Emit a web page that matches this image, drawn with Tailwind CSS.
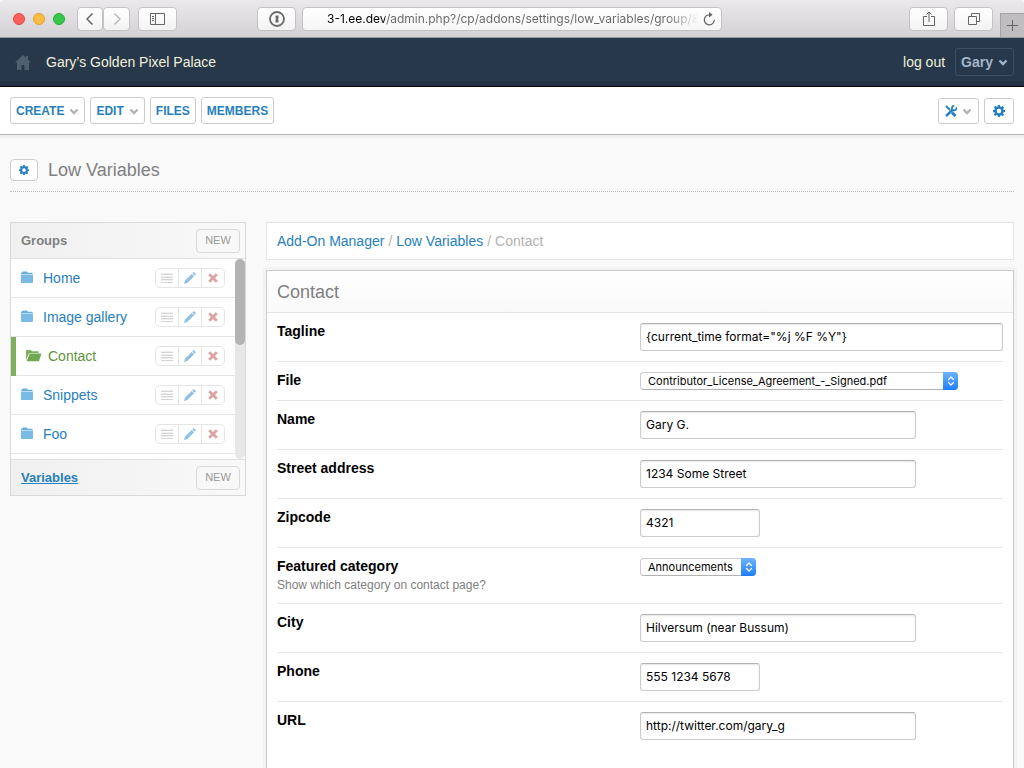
<!DOCTYPE html>
<html lang="en">
  <head>
    <meta charset="UTF-8" />
    <meta name="viewport" content="width=device-width, initial-scale=1.0" />
    <title>Low Variables - Contact</title>
    <script src="https://cdn.jsdelivr.net/npm/@tailwindcss/browser@4"></script>
  </head>
  <body class="flex min-h-screen flex-col overflow-x-hidden bg-[#f9f9f9] font-['Liberation_Sans',Arial,sans-serif] text-sm text-black">
    <!-- Shared icons -->
    <svg class="hidden">
      <symbol id="chevron" viewBox="0 0 10 8">
        <path d="M1.500 2.500 5 6 8.500 2.500" fill="none" stroke="currentColor" stroke-width="2.400" />
      </symbol>
      <symbol id="gear" viewBox="0 0 24 24">
        <path
          fill="currentColor"
          fill-rule="evenodd"
          d="M10 0h4l.6 3.2 2.2.9L19.500 2.200l2.800 2.800-1.900 2.700.9 2.200L24 10v4l-2.900.6-.9 2.200 1.900 2.700-2.800 2.800-2.700-1.900-2.200.9L14 24h-4l-.6-2.900-2.200-.9-2.700 1.900-2.800-2.800 1.900-2.700-.9-2.200L0 14v-4l2.900-.6.9-2.200L1.900 4.500l2.800-2.800 2.700 1.900 2.200-.9zM12 7.500a4.500 4.500 0 1 0 0 9 4.500 4.500 0 0 0 0-9z"
        />
      </symbol>
      <symbol id="folder" viewBox="0 0 12 14">
        <path d="M0 3V1.700h.8L1.800.500h4.200l.8 1.200h4.700V3z" fill="#69b0dd" />
        <path d="M0 3.500h12V11.200a.8.8 0 0 1-.8.8H.8A.8.8 0 0 1 0 11.200z" fill="#7abbe6" />
      </symbol>
      <symbol id="folder-open" viewBox="0 0 16 14">
        <path d="M0 11V1.700L.7 1h4.100l1.200 1.300h6.500V4H4.200L2.800 5z" fill="#7db05f" />
        <path d="M3.800 4.500h11.700L12.900 12.300H.6z" fill="#72a852" />
      </symbol>
      <symbol id="bars" viewBox="0 0 12 10">
        <path d="M0 1h12M0 4h12M0 7h12M0 9.500h12" stroke="#e0e0e0" stroke-width="1" />
        <path d="M0 1.500h12M0 4.500h12M0 6.500h12M0 9.500h12" stroke="#d4d4d4" stroke-width="1" />
      </symbol>
      <symbol id="pencil" viewBox="0 0 12 12">
        <path d="M0 12 .9 8.700 7.700 1.900l2.400 2.400L3.300 11.100zM8.300 1.400 9.700 0 12 2.300 10.600 3.700z" fill="#93bfe0" />
      </symbol>
      <symbol id="cross" viewBox="0 0 10 10">
        <path d="M1.200 1.200 8.800 8.800M8.800 1.200 1.200 8.800" stroke="#dca3a3" stroke-width="2.800" />
      </symbol>
      <symbol id="updown" viewBox="0 0 8 12">
        <path d="M1.500 4.500 4 2l2.500 2.500M1.500 7.500 4 10l2.500-2.500" fill="none" stroke="#fff" stroke-width="1.300" stroke-linecap="round" stroke-linejoin="round" />
      </symbol>
    </svg>

    <!-- Browser toolbar -->
    <div class="flex h-[38px] items-center rounded-t-[4px] border-b border-[#9b999b] bg-linear-to-b from-[#ebe9eb] to-[#d3d1d3] pl-[13px]">
      <div class="flex gap-2">
        <span class="size-3 rounded-full border border-[#e2463f] bg-[#fc605c]"></span>
        <span class="size-3 rounded-full border border-[#dfa032] bg-[#fdbc40]"></span>
        <span class="size-3 rounded-full border border-[#27aa35] bg-[#34c84a]"></span>
      </div>
      <div class="ml-3 flex">
        <button aria-label="Back" class="grid h-6 w-[26px] place-items-center rounded-[4px] border border-[#c4c2c4] bg-linear-to-b from-white to-[#f3f3f3]">
          <svg class="h-3 w-2" viewBox="0 0 8 12" fill="none" stroke="#656565" stroke-width="1.500"><path d="M6.500 .5 1 6 6.500 11.500" /></svg>
        </button>
        <button aria-label="Forward" class="grid h-6 w-[27px] place-items-center rounded-[4px] border border-[#c4c2c4] bg-linear-to-b from-white to-[#f3f3f3]">
          <svg class="h-3 w-2" viewBox="0 0 8 12" fill="none" stroke="#bcbcbc" stroke-width="1.500"><path d="M1.500 .5 7 6 1.500 11.500" /></svg>
        </button>
      </div>
      <button aria-label="Sidebar" class="ml-2 grid h-6 w-[39px] place-items-center rounded-[4px] border border-[#c4c2c4] bg-linear-to-b from-white to-[#f3f3f3]">
        <svg class="h-3 w-[15px]" viewBox="0 0 15 12" fill="none" stroke="#656565"><path d="M.5.500h14v11H.5zM5.500.500v11M2 3.500h2M2 5.500h2M2 7.500h2" /></svg>
      </button>
      <button aria-label="Passwords" class="ml-20 grid h-6 w-[39px] place-items-center rounded-[4px] border border-[#c4c2c4] bg-linear-to-b from-white to-[#f3f3f3]">
        <svg class="size-4" viewBox="0 0 16 16">
          <circle cx="8" cy="8" r="7" fill="none" stroke="#6b6b6b" stroke-width="1.800" />
          <path d="M6.500 4.500h3v3l-.7.700.7.700v2.600h-3v-3l.7-.7-.7-.7z" fill="#6b6b6b" />
        </svg>
      </button>
      <div class="mr-[187px] ml-1.5 flex h-6 flex-1 items-center rounded-[4px] border border-[#c4c2c4] bg-linear-to-b from-white to-[#f6f6f6] pr-[5px] pl-6">
        <input
          type="text"
          aria-label="Address"
          value="3-1.ee.dev/admin.php?/cp/addons/settings/low_variables/group/8"
          class="h-5 min-w-0 flex-1 bg-[linear-gradient(90deg,#000_58px,#666_58px,#666_340px,transparent_372px)] bg-clip-text font-[Inter,sans-serif] text-xs text-transparent outline-none"
        />
        <button aria-label="Reload" class="ml-1">
          <svg class="size-[14px]" viewBox="0 0 14 14">
            <path d="M7.500 2.800a5 5 0 1 0 4.800 5" fill="none" stroke="#656565" stroke-width="1.200" />
            <path d="M7 0v5.600l3.600-2.800z" fill="#656565" />
          </svg>
        </button>
      </div>
      <button aria-label="Share" class="grid h-6 w-[39px] place-items-center rounded-[4px] border border-[#c4c2c4] bg-linear-to-b from-white to-[#f3f3f3]">
        <svg class="h-4 w-3" viewBox="0 0 12 16" fill="none" stroke="#656565"><path d="M4 5.500H.5v9h11v-9H8M6 11V1M3.500 3.500 6 1l2.500 2.500" /></svg>
      </button>
      <button aria-label="Tabs" class="ml-1.5 grid h-6 w-[39px] place-items-center rounded-[4px] border border-[#c4c2c4] bg-linear-to-b from-white to-[#f3f3f3]">
        <svg class="size-3" viewBox="0 0 12 12" fill="none" stroke="#656565"><path d="M.5 3.500h8v8h-8zM3.500 3V.5h8v8H9" /></svg>
      </button>
      <button aria-label="New tab" class="ml-[7px] grid h-6 w-6 place-items-center self-end border-t border-l border-[#a5a3a5] bg-[#bfbdbf]">
        <svg class="size-[11px]" viewBox="0 0 11 11" stroke="#656565"><path d="M5.500 0v11M0 5.500h11" /></svg>
      </button>
    </div>

    <!-- Site header -->
    <header class="flex h-[49px] items-center border-b border-black bg-[linear-gradient(to_top,#223242_5px,#263849_5px)] px-2.5">
      <a href="#" aria-label="Home" class="ml-[5px]">
        <svg class="h-[15px] w-4" viewBox="0 0 16 15" fill="#506070"><path d="M8 0 0 7.500h2V15h4.500v-5h3v5H14V7.500h2L13 4.700V1h-2v1.800z" /></svg>
      </a>
      <h1 class="ml-[15px] text-[#f1f0dc]">Gary’s Golden Pixel Palace</h1>
      <a href="#" class="ml-auto text-[#f1f0dc]">log out</a>
      <button class="ml-2.5 flex h-7 items-center gap-[5px] rounded-[3px] border border-[#3b4f63] px-[5px] font-bold text-[#a3b5c9]">
        Gary
        <svg class="h-2 w-2.5"><use href="#chevron" /></svg>
      </button>
    </header>

    <!-- Main menu -->
    <nav class="flex h-12 items-center gap-[5px] border-b border-[#b5b5b5] bg-white px-2.5 text-xs font-bold text-[#2780bd]">
      <button class="flex h-[27px] items-center gap-[5px] rounded-[3px] border border-[#ccc] px-[5px]">
        CREATE
        <svg class="h-2 w-2.5 text-[#b3b3b3]"><use href="#chevron" /></svg>
      </button>
      <button class="flex h-[27px] items-center gap-[5px] rounded-[3px] border border-[#ccc] px-[5px]">
        EDIT
        <svg class="h-2 w-2.5 text-[#b3b3b3]"><use href="#chevron" /></svg>
      </button>
      <a href="#" class="flex h-[27px] items-center rounded-[3px] border border-[#ccc] px-[5px]">FILES</a>
      <a href="#" class="flex h-[27px] items-center rounded-[3px] border border-[#ccc] px-[5px]">MEMBERS</a>
      <button aria-label="Developer tools" class="ml-auto flex h-[26px] w-[41px] items-center justify-center gap-[5px] rounded-[3px] border border-[#ccc]">
        <svg class="size-3" viewBox="0 0 12 12" fill="none" stroke="currentColor">
          <path d="M1 1 5 5" stroke-width="2" />
          <path d="M7 7.500 10.500 11" stroke-width="3" />
          <path d="M1 11 8 4.500" stroke-width="2.400" />
          <path d="M11.300 2.200A2.300 2.300 0 1 1 9.300.8" stroke-width="1.800" />
        </svg>
        <svg class="h-2 w-2.5 text-[#b3b3b3]"><use href="#chevron" /></svg>
      </button>
      <a href="#" aria-label="Settings" class="grid h-[26px] w-[30px] place-items-center rounded-[3px] border border-[#ccc]">
        <svg class="size-3"><use href="#gear" /></svg>
      </a>
    </nav>

    <div class="flex flex-1 flex-col px-2.5 shadow-[inset_0_3px_0_#f0f0f0]">
      <!-- Page title -->
      <div class="flex h-[57px] items-center gap-2.5 border-b border-dotted border-[#bbb] pt-3.5">
        <a href="#" aria-label="Add-on settings" class="grid h-[22px] w-7 place-items-center rounded-[4px] border border-[#ccc] bg-white text-[#2780bd]">
          <svg class="size-2.5"><use href="#gear" /></svg>
        </a>
        <h2 class="text-lg text-[#808080]">Low Variables</h2>
      </div>

      <div class="mt-[30px] flex flex-1 gap-5">
        <!-- Groups -->
        <aside class="w-[236px] shrink-0 self-start border border-[#d9d9d9]">
          <div class="flex h-9 items-center justify-between border-b border-[#e0e0e0] bg-linear-to-r from-[#f0f0f0] to-[#f9f9f9] pt-px pr-[5px] pl-2.5">
            <h3 class="text-[13px] font-bold text-[#808080]">Groups</h3>
            <button class="h-6 w-11 rounded-[4px] border border-[#d9d9d9] text-[11px] text-[#999]">NEW</button>
          </div>
          <div class="flex h-[201px] border-b border-[#e0e0e0] bg-white">
            <ul class="flex-1">
              <li class="flex h-[39px] items-center border-b border-[#e5e5e5] px-2.5">
                <span class="w-[22px]"><svg class="h-3.5 w-3"><use href="#folder" /></svg></span>
                <a href="#" class="flex-1 text-[#2780bd]">Home</a>
                <div class="flex h-5 divide-x divide-[#e5e5e5] rounded-[5px] border border-[#e5e5e5]">
                  <button aria-label="Sort" class="grid w-[23px] place-items-center"><svg class="h-2.5 w-3"><use href="#bars" /></svg></button>
                  <button aria-label="Edit" class="grid w-[23px] place-items-center"><svg class="size-3"><use href="#pencil" /></svg></button>
                  <button aria-label="Remove" class="grid w-[22px] place-items-center"><svg class="size-2.5"><use href="#cross" /></svg></button>
                </div>
              </li>
              <li class="flex h-[39px] items-center border-b border-[#e5e5e5] px-2.5">
                <span class="w-[22px]"><svg class="h-3.5 w-3"><use href="#folder" /></svg></span>
                <a href="#" class="flex-1 text-[#2780bd]">Image gallery</a>
                <div class="flex h-5 divide-x divide-[#e5e5e5] rounded-[5px] border border-[#e5e5e5]">
                  <button aria-label="Sort" class="grid w-[23px] place-items-center"><svg class="h-2.5 w-3"><use href="#bars" /></svg></button>
                  <button aria-label="Edit" class="grid w-[23px] place-items-center"><svg class="size-3"><use href="#pencil" /></svg></button>
                  <button aria-label="Remove" class="grid w-[22px] place-items-center"><svg class="size-2.5"><use href="#cross" /></svg></button>
                </div>
              </li>
              <li class="flex h-[39px] items-stretch">
                <span class="w-[5px] bg-[#7db05f]"></span>
                <div class="flex flex-1 items-center border-b border-[#e5e5e5] px-2.5">
                  <span class="w-[22px]"><svg class="h-3.5 w-4"><use href="#folder-open" /></svg></span>
                  <a href="#" class="flex-1 text-[#5f9440]">Contact</a>
                  <div class="flex h-5 divide-x divide-[#e5e5e5] rounded-[5px] border border-[#e5e5e5]">
                    <button aria-label="Sort" class="grid w-[23px] place-items-center"><svg class="h-2.5 w-3"><use href="#bars" /></svg></button>
                    <button aria-label="Edit" class="grid w-[23px] place-items-center"><svg class="size-3"><use href="#pencil" /></svg></button>
                    <button aria-label="Remove" class="grid w-[22px] place-items-center"><svg class="size-2.5"><use href="#cross" /></svg></button>
                  </div>
                </div>
              </li>
              <li class="flex h-[39px] items-center border-b border-[#e5e5e5] px-2.5">
                <span class="w-[22px]"><svg class="h-3.5 w-3"><use href="#folder" /></svg></span>
                <a href="#" class="flex-1 text-[#2780bd]">Snippets</a>
                <div class="flex h-5 divide-x divide-[#e5e5e5] rounded-[5px] border border-[#e5e5e5]">
                  <button aria-label="Sort" class="grid w-[23px] place-items-center"><svg class="h-2.5 w-3"><use href="#bars" /></svg></button>
                  <button aria-label="Edit" class="grid w-[23px] place-items-center"><svg class="size-3"><use href="#pencil" /></svg></button>
                  <button aria-label="Remove" class="grid w-[22px] place-items-center"><svg class="size-2.5"><use href="#cross" /></svg></button>
                </div>
              </li>
              <li class="flex h-[39px] items-center border-b border-[#e5e5e5] px-2.5">
                <span class="w-[22px]"><svg class="h-3.5 w-3"><use href="#folder" /></svg></span>
                <a href="#" class="flex-1 text-[#2780bd]">Foo</a>
                <div class="flex h-5 divide-x divide-[#e5e5e5] rounded-[5px] border border-[#e5e5e5]">
                  <button aria-label="Sort" class="grid w-[23px] place-items-center"><svg class="h-2.5 w-3"><use href="#bars" /></svg></button>
                  <button aria-label="Edit" class="grid w-[23px] place-items-center"><svg class="size-3"><use href="#pencil" /></svg></button>
                  <button aria-label="Remove" class="grid w-[22px] place-items-center"><svg class="size-2.5"><use href="#cross" /></svg></button>
                </div>
              </li>
            </ul>
            <div class="w-2.5 rounded-[5px] bg-[#e7e7e7]">
              <div class="h-[86px] rounded-[5px] bg-[#b3b3b3]"></div>
            </div>
          </div>
          <div class="flex h-[35px] items-center justify-between bg-linear-to-r from-[#f0f0f0] to-[#f9f9f9] pt-px pr-[5px] pl-2.5">
            <a href="#" class="text-[13px] font-bold text-[#2780bd] underline">Variables</a>
            <button class="h-6 w-11 rounded-[4px] border border-[#d9d9d9] text-[11px] text-[#999]">NEW</button>
          </div>
        </aside>

        <!-- Variables of the selected group -->
        <main class="flex min-w-0 flex-1 flex-col">
          <div class="flex h-[38px] items-center gap-1 border border-[#e5e5e5] bg-white px-2.5 text-[#b3b3b3]">
            <a href="#" class="text-[#2780bd]">Add-On Manager</a>
            <span>/</span>
            <a href="#" class="text-[#2780bd]">Low Variables</a>
            <span>/</span>
            <span>Contact</span>
          </div>

          <form class="mt-2.5 flex-1 border border-b-0 border-[#ccc] bg-white shadow-[0_0_0_3px_#f3f3f3]">
            <h2 class="flex h-[42px] items-center border-b border-[#e5e5e5] bg-linear-to-b from-white to-[#f9f9f9] px-2.5 text-lg text-[#808080]">Contact</h2>
            <div class="divide-y divide-[#e5e5e5] px-2.5 leading-4">
              <div class="grid grid-cols-2 py-2.5">
                <label for="tagline" class="font-bold">Tagline</label>
                <input id="tagline" type="text" value='{current_time format="%j %F %Y"}' class="h-7 w-full rounded-[3px] border border-[#ccc] border-t-[#b3b3b3] px-[5px] pb-0.5 font-[Inter,sans-serif] text-xs shadow-[inset_0_1px_2px_#0000001a]" />
              </div>
              <div class="grid grid-cols-2 py-2.5">
                <label for="file" class="font-bold">File</label>
                <div class="relative h-[18px] w-[318px]">
                  <select id="file" class="block h-[18px] w-full appearance-none rounded-[4px] border border-[#ccc] border-b-[#b3b3b3] bg-white px-[7px] font-[Inter,sans-serif] text-[11px] leading-4">
                    <option>Contributor_License_Agreement_-_Signed.pdf</option>
                  </select>
                  <span class="pointer-events-none absolute inset-y-0 right-0 grid w-[15px] place-items-center rounded-r-[4px] bg-linear-to-b from-[#6bb3fa] to-[#1a7dfd]"><svg class="h-3 w-2"><use href="#updown" /></svg></span>
                </div>
              </div>
              <div class="grid grid-cols-2 py-2.5">
                <label for="name" class="font-bold">Name</label>
                <input id="name" type="text" value="Gary G." class="h-7 w-[276px] rounded-[3px] border border-[#ccc] border-t-[#b3b3b3] px-[5px] pb-0.5 font-[Inter,sans-serif] text-xs shadow-[inset_0_1px_2px_#0000001a]" />
              </div>
              <div class="grid grid-cols-2 py-2.5">
                <label for="street" class="font-bold">Street address</label>
                <input id="street" type="text" value="1234 Some Street" class="h-7 w-[276px] rounded-[3px] border border-[#ccc] border-t-[#b3b3b3] px-[5px] pb-0.5 font-[Inter,sans-serif] text-xs shadow-[inset_0_1px_2px_#0000001a]" />
              </div>
              <div class="grid grid-cols-2 py-2.5">
                <label for="zipcode" class="font-bold">Zipcode</label>
                <input id="zipcode" type="text" value="4321" class="h-7 w-[120px] rounded-[3px] border border-[#ccc] border-t-[#b3b3b3] px-[5px] pb-0.5 font-[Inter,sans-serif] text-xs shadow-[inset_0_1px_2px_#0000001a]" />
              </div>
              <div class="grid grid-cols-2 py-2.5">
                <div>
                  <label for="category" class="block font-bold">Featured category</label>
                  <p class="mt-1 text-xs leading-[15px] text-[#808080]">Show which category on contact page?</p>
                </div>
                <div class="relative h-[18px] w-[116px]">
                  <select id="category" class="block h-[18px] w-full appearance-none rounded-[4px] border border-[#ccc] border-b-[#b3b3b3] bg-white px-[7px] font-[Inter,sans-serif] text-[11px] leading-4">
                    <option>Announcements</option>
                  </select>
                  <span class="pointer-events-none absolute inset-y-0 right-0 grid w-[15px] place-items-center rounded-r-[4px] bg-linear-to-b from-[#6bb3fa] to-[#1a7dfd]"><svg class="h-3 w-2"><use href="#updown" /></svg></span>
                </div>
              </div>
              <div class="grid grid-cols-2 py-2.5">
                <label for="city" class="font-bold">City</label>
                <input id="city" type="text" value="Hilversum (near Bussum)" class="h-7 w-[276px] rounded-[3px] border border-[#ccc] border-t-[#b3b3b3] px-[5px] pb-0.5 font-[Inter,sans-serif] text-xs shadow-[inset_0_1px_2px_#0000001a]" />
              </div>
              <div class="grid grid-cols-2 py-2.5">
                <label for="phone" class="font-bold">Phone</label>
                <input id="phone" type="text" value="555 1234 5678" class="h-7 w-[120px] rounded-[3px] border border-[#ccc] border-t-[#b3b3b3] px-[5px] pb-0.5 font-[Inter,sans-serif] text-xs shadow-[inset_0_1px_2px_#0000001a]" />
              </div>
              <div class="grid grid-cols-2 py-2.5">
                <label for="url" class="font-bold">URL</label>
                <input id="url" type="text" value="http://twitter.com/gary_g" class="h-7 w-[276px] rounded-[3px] border border-[#ccc] border-t-[#b3b3b3] px-[5px] pb-0.5 font-[Inter,sans-serif] text-xs shadow-[inset_0_1px_2px_#0000001a]" />
              </div>
            </div>
          </form>
        </main>
      </div>
    </div>
  </body>
</html>
